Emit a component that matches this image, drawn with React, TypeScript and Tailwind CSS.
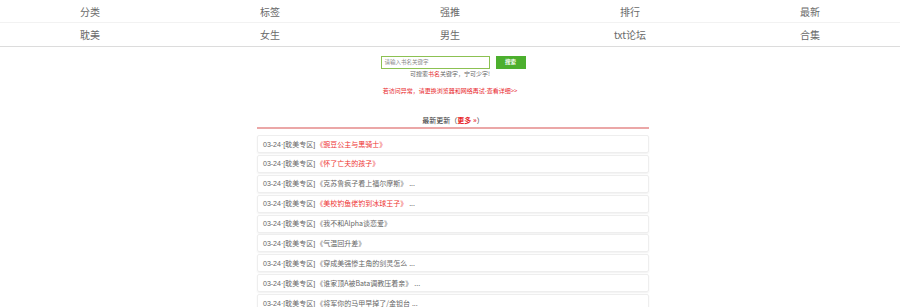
import React from "react";

const nav1 = ["分类", "标签", "强推", "排行", "最新"];
const nav2 = ["耽美", "女生", "男生", "txt论坛", "合集"];

const items: { title: string; red?: boolean; more?: boolean }[] = [
  { title: "《豌豆公主与黑骑士》", red: true },
  { title: "《怀了亡夫的孩子》", red: true },
  { title: "《克苏鲁疯子看上福尔摩斯》", more: true },
  { title: "《美校钓鱼佬钓到冰球王子》", red: true, more: true },
  { title: "《我不和Alpha谈恋爱》" },
  { title: "《气温回升差》" },
  { title: "《穿成美强惨主角的剑灵怎么", more: true },
  { title: "《谁家顶A被Bata调教压着亲》", more: true },
  { title: "《将军你的马甲早掉了/金钽台", more: true },
];

export default function App() {
  return (
    <div
      className="w-[900px] h-[307px] overflow-hidden bg-white"
      style={{ fontFamily: '"Noto Sans CJK SC", "Noto Sans", sans-serif' }}
    >
      <div className="border-b border-[#dcdcdc]">
        <div className="grid grid-cols-5 h-[23px] border-b border-[#f2f2f2]">
          {nav1.map((t) => (
            <div key={t} className="flex items-center justify-center text-[10px] text-[#6a6a6a]">
              {t}
            </div>
          ))}
        </div>
        <div className="grid grid-cols-5 h-[23px]">
          {nav2.map((t) => (
            <div key={t} className="flex items-center justify-center text-[10px] text-[#6a6a6a]">
              {t}
            </div>
          ))}
        </div>
      </div>

      <div className="flex flex-col items-center pt-[9px]">
        <div className="flex items-center ml-[6px]">
          <div className="w-[109px] h-[13px] border border-[#8cc152] flex items-center pl-[3px] text-[5.5px] text-[#888] leading-none">
            请输入书名关键字
          </div>
          <div className="ml-[6px] w-[30px] h-[13px] bg-[#4caf2e] flex items-center justify-center text-[5.5px] font-bold text-white leading-none">
            搜索
          </div>
        </div>
        <div className="mt-[1px] text-[6px] leading-[8px] text-[#666]">
          可搜索<span className="text-[#e53333]">书名</span>关键字，宁可少字!
        </div>
        <div className="mt-[9px] text-[6px] leading-[8px] text-[#e8262b]">
          若访问异常，请更换浏览器和网络再试-查看详细&gt;&gt;
        </div>
      </div>

      <div className="w-[392px] ml-[257px]">
        <div className="mt-[19px] h-[13px] flex items-center justify-center text-[7px] text-[#333] leading-none">
          最新更新（<span className="text-[#e8262b] font-bold">更多 »</span>）
        </div>
        <div className="h-[2px] bg-[#eba7a7]" />
        <div className="mt-[6px] flex flex-col">
          {items.map((it, i) => (
            <div
              key={i}
              className="h-[18px] mb-[1.9px] border border-[#eeeeee] rounded-[2px] shadow-[0_1px_2px_rgba(0,0,0,0.06)] flex items-center pl-[5px] text-[7px] text-[#666] leading-none whitespace-nowrap"
            >
              <span style={{ fontFamily: '"Liberation Sans", "Noto Sans CJK SC", sans-serif' }}>03-24·[</span>
              <span>耽美专区</span>
              <span style={{ fontFamily: '"Liberation Sans", sans-serif' }}>]</span>
              <span className={it.red ? "text-[#ee3333] ml-[1px]" : "ml-[1px]"}>{it.title}</span>
              {it.more && <span className="ml-[2px]">...</span>}
            </div>
          ))}
        </div>
      </div>
    </div>
  );
}
